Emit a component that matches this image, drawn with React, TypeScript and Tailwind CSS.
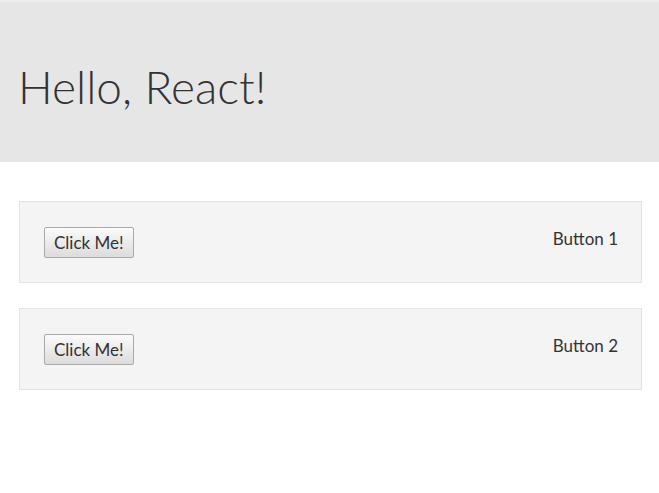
import { useState } from 'react';

const FONT = { fontFamily: 'Lato, "Noto Sans", sans-serif' };

function Well({ label }: { label: string }) {
  const [clicks, setClicks] = useState(0);
  return (
    <div className="mb-[25px] flex items-start justify-between border border-[#e3e3e3] bg-[#f4f4f4] pt-[25px] pb-[24px] pl-[24px] pr-[23px]">
      <button
        onClick={() => setClicks(c => c + 1)}
        className="h-[31px] rounded-[2px] border border-[#a9a9a9] bg-gradient-to-b from-[#fbfbfb] to-[#dcdcdc] px-[9px] text-[17px] leading-none text-[#333]"
      >
        Click Me!
      </button>
      <span className="text-[17px] leading-[24px] text-[#333]" title={`${clicks}`}>
        {label}
      </span>
    </div>
  );
}

export default function App() {
  return (
    <div className="min-h-screen bg-white" style={FONT}>
      {/* Jumbotron */}
      <div className="h-[162px] border-t-2 border-[#ececec] bg-[#e6e6e6] pl-[18px] pt-[55px]">
        <h1 className="text-[46px] font-light leading-[60px] text-[#333]">Hello, React!</h1>
      </div>

      <div className="pl-[19px] pr-[17px] pt-[39px]">
        <Well label="Button 1" />
        <Well label="Button 2" />
      </div>
    </div>
  );
}
